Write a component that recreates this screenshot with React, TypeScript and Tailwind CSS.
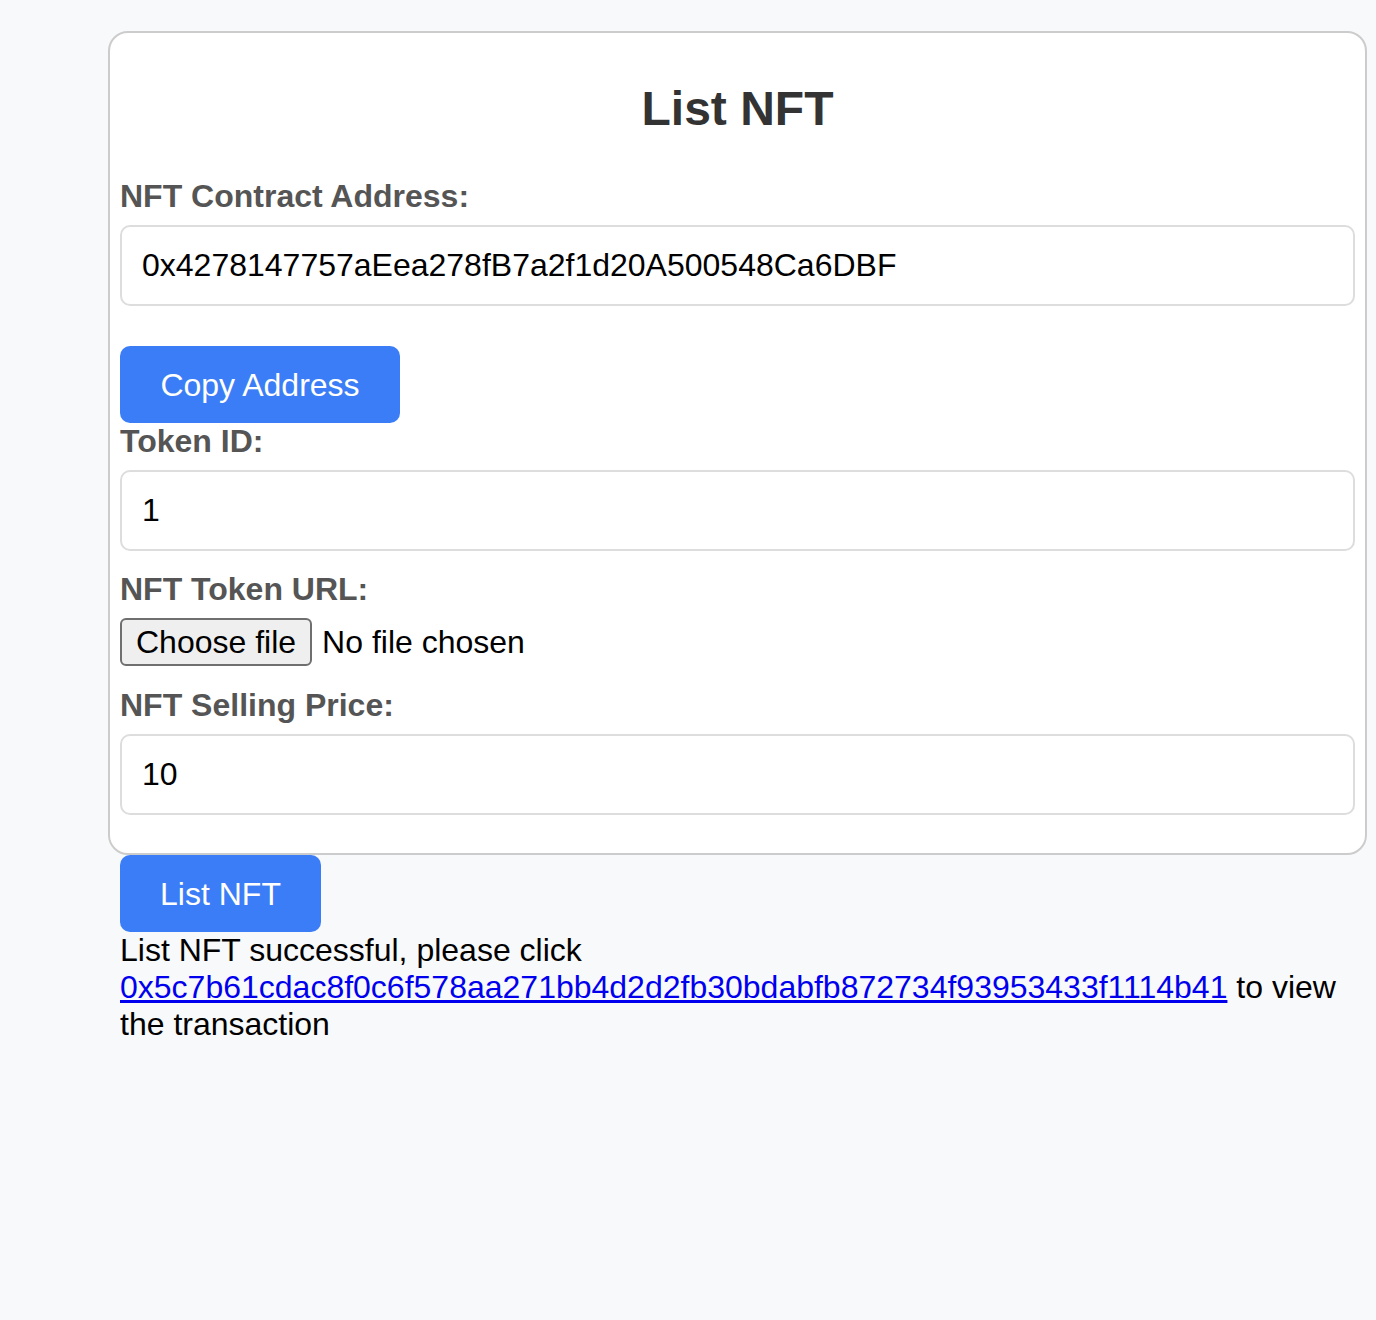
import React, { useState } from "react";

const labelCls =
  "block text-[32px] leading-[37px] font-bold text-[#555] mb-[10px]";
const inputCls =
  "block w-full h-[81px] border-2 border-[#ddd] rounded-[10px] pl-[20px] pr-[20px] text-[32px] text-black bg-white outline-none";
const btnCls =
  "flex items-center justify-center h-[77px] bg-[#3b7df6] rounded-[10px] text-white text-[32px]";

export default function App() {
  const [address, setAddress] = useState(
    "0x4278147757aEea278fB7a2f1d20A500548Ca6DBF"
  );
  const [tokenId, setTokenId] = useState("1");
  const [price, setPrice] = useState("10");
  const tx =
    "0x5c7b61cdac8f0c6f578aa271bb4d2d2fb30bdabfb872734f93953433f1114b41";

  return (
    <div
      className="min-h-[1320px] bg-[#f8f9fa] pt-[31px]"
      style={{ fontFamily: '"Liberation Sans", Arial, sans-serif' }}
    >
      <div className="ml-[108px] w-[1259px] bg-white border-2 border-[#ccc] rounded-[20px] px-[10px] pt-[48px] pb-[38px]">
        <h2 className="text-center text-[48px] leading-[56px] font-bold text-[#333] mb-[41px]">
          List NFT
        </h2>

        <label className={labelCls}>NFT Contract Address:</label>
        <input
          className={inputCls}
          value={address}
          onChange={(e) => setAddress(e.target.value)}
        />
        <button className={`${btnCls} w-[280px] mt-[40px]`}>
          Copy Address
        </button>

        <label className={labelCls}>Token ID:</label>
        <input
          className={inputCls}
          value={tokenId}
          onChange={(e) => setTokenId(e.target.value)}
        />

        <label className={`${labelCls} mt-[20px]`}>NFT Token URL:</label>
        <div className="flex items-center h-[48px] text-[32px] text-black">
          <span className="flex items-center h-[48px] px-[14px] border-2 border-[#6f6f6f] rounded-[6px] bg-[#efefef]">
            Choose file
          </span>
          <span className="ml-[10px]">No file chosen</span>
        </div>

        <label className={`${labelCls} mt-[21px]`}>NFT Selling Price:</label>
        <input
          className={inputCls}
          value={price}
          onChange={(e) => setPrice(e.target.value)}
        />
      </div>

      <div className="ml-[120px] w-[1246px]">
        <button className={`${btnCls} w-[201px]`}>List NFT</button>
        <p className="text-[32px] leading-[37px] text-black">
          List NFT successful, please click{" "}
          <a href="#" className="text-[#0000ee] underline">
            {tx}
          </a>{" "}
          to view the transaction
        </p>
      </div>
    </div>
  );
}
